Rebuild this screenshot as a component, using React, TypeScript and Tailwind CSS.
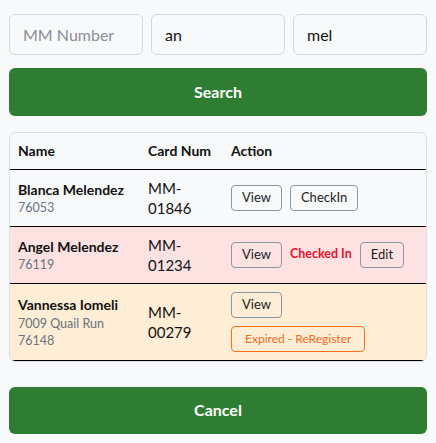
import React from 'react';

type Member = {
  name: string;
  address?: string;
  zip: string;
  card: string;
  status: 'open' | 'checked' | 'expired';
};

const members: Member[] = [
  { name: 'Blanca Melendez', zip: '76053', card: '01846', status: 'open' },
  { name: 'Angel Melendez', zip: '76119', card: '01234', status: 'checked' },
  { name: 'Vannessa Iomeli', address: '7009 Quail Run', zip: '76148', card: '00279', status: 'expired' },
];

const rowBg: Record<Member['status'], string> = {
  open: 'bg-[#f8f9fb]',
  checked: 'bg-[#fee2e2]',
  expired: 'bg-[#ffedd5]',
};

const SmallButton: React.FC<{ children: React.ReactNode }> = ({ children }) => (
  <button className="h-[26px] px-[10px] rounded-[4px] border border-[#8d96a3] bg-transparent text-[13px] text-[#1c1c1c]">
    {children}
  </button>
);

const App: React.FC = () => {
  return (
    <div className="min-h-[443px] w-[436px] bg-[#f8f9fb] px-[9px] pt-[14px] font-['Lato',sans-serif] text-[#111]">
      <div className="grid grid-cols-3 gap-2">
        <input
          placeholder="MM Number"
          className="h-[41px] rounded-[6px] border border-[#d5d7dd] bg-[#f8f9fb] px-[13px] text-[16px] placeholder:text-[#8a8f98] outline-none"
        />
        <input
          defaultValue="an"
          className="h-[41px] rounded-[6px] border border-[#d5d7dd] bg-[#f8f9fb] px-[13px] text-[16px] outline-none"
        />
        <input
          defaultValue="mel"
          className="h-[41px] rounded-[6px] border border-[#d5d7dd] bg-[#f8f9fb] px-[13px] text-[16px] outline-none"
        />
      </div>

      <button className="mt-[13px] h-[48px] w-full rounded-[6px] bg-[#2e7d32] text-[16px] font-bold text-white">
        Search
      </button>

      <div className="mt-[16px] overflow-hidden rounded-[6px] border border-[#dcdee2] bg-[#f8f9fb]">
        <table className="w-full table-fixed border-collapse text-left">
          <thead>
            <tr className="h-[36px] border-b border-black">
              <th className="w-[138px] pl-[8px] text-[14px] font-bold">Name</th>
              <th className="w-[83px] text-[14px] font-bold">Card Num</th>
              <th className="text-[14px] font-bold">Action</th>
            </tr>
          </thead>
          <tbody>
            {members.map((m) => (
              <tr key={m.card} className={`border-b border-black ${rowBg[m.status]}`}>
                <td className="py-[8px] pl-[8px] align-middle">
                  <div className="text-[14px] font-bold leading-[20px]">{m.name}</div>
                  {m.address && <div className="text-[12.5px] leading-[18px] text-[#6c727b]">{m.address}</div>}
                  <div className="text-[12.5px] leading-[16px] text-[#6c727b]">{m.zip}</div>
                </td>
                <td className="py-[8px] align-middle text-[15px] leading-[20px]">
                  MM-
                  <br />
                  {m.card}
                </td>
                <td className="py-[8px] align-middle">
                  {m.status === 'open' && (
                    <div className="flex items-center gap-2">
                      <SmallButton>View</SmallButton>
                      <SmallButton>CheckIn</SmallButton>
                    </div>
                  )}
                  {m.status === 'checked' && (
                    <div className="flex items-center gap-2">
                      <SmallButton>View</SmallButton>
                      <span className="text-[12.5px] font-bold text-[#e8112d]">Checked In</span>
                      <SmallButton>Edit</SmallButton>
                    </div>
                  )}
                  {m.status === 'expired' && (
                    <div className="flex flex-col items-start gap-2">
                      <SmallButton>View</SmallButton>
                      <button className="h-[26px] rounded-[4px] border border-[#f97316] px-[13px] text-[12px] text-[#f26b1d]">
                        Expired - ReRegister
                      </button>
                    </div>
                  )}
                </td>
              </tr>
            ))}
          </tbody>
        </table>
      </div>

      <button className="mt-[25px] h-[47px] w-full rounded-[6px] bg-[#2e7d32] text-[16px] font-bold text-white">
        Cancel
      </button>
    </div>
  );
};

export default App;
